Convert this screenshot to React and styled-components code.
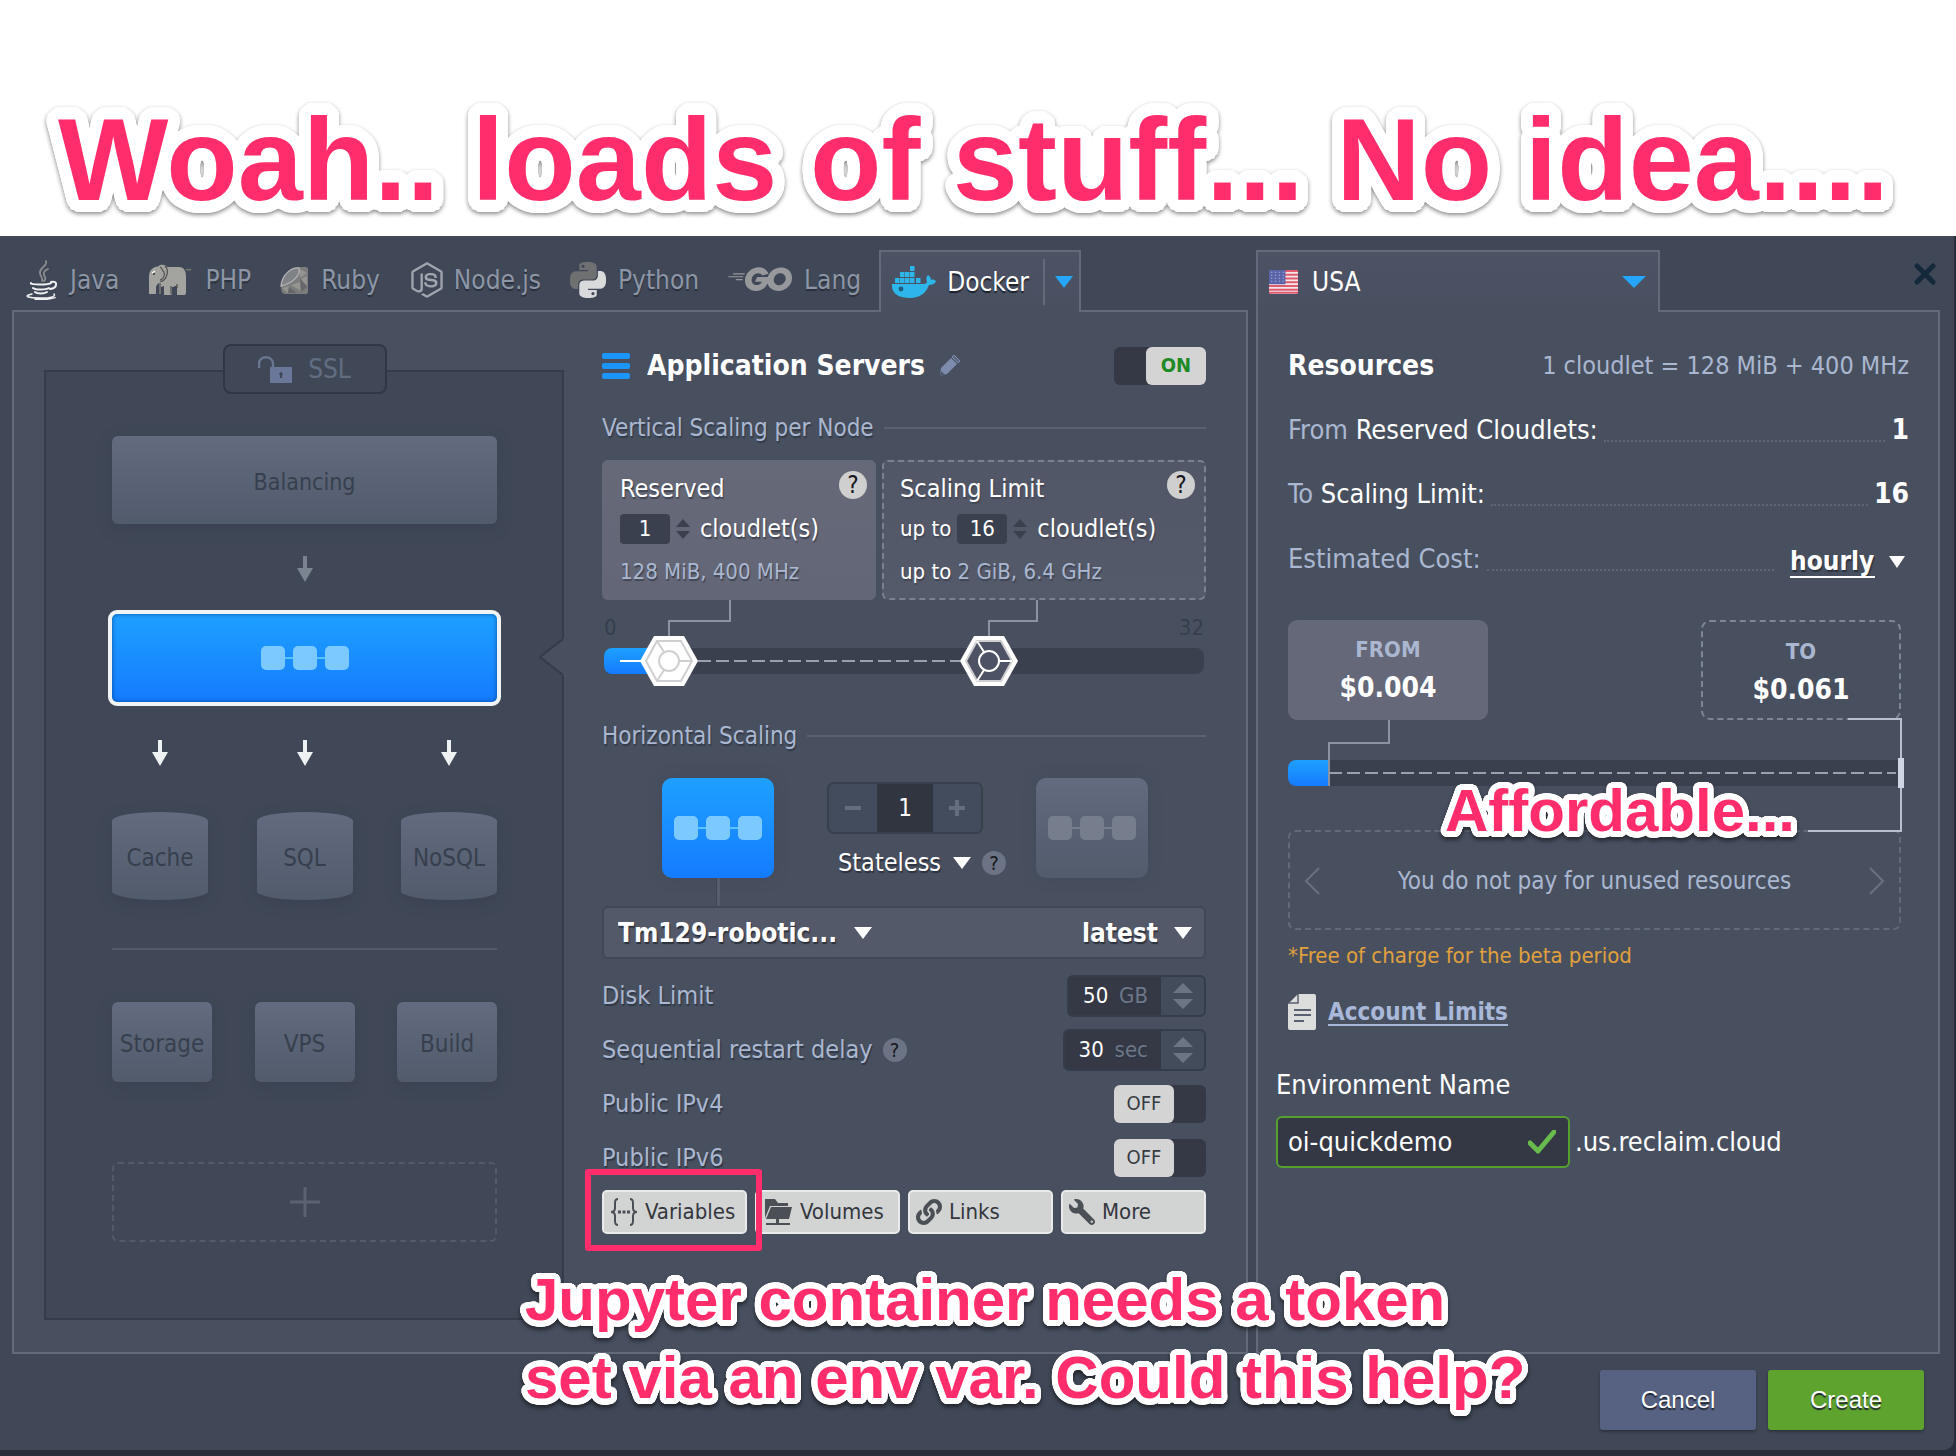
import React from "react";
import styled, { createGlobalStyle, css } from "styled-components";
import { FaJava, FaNodeJs, FaLink, FaWrench } from "react-icons/fa";
import { FaGolang } from "react-icons/fa6";

const c = {
  dialog: "#404857",
  panel: "#485060",
  line: "#636b7b",
  well: "#343945",
  muted: "#abb7d0",
  blue: "linear-gradient(#1ea0ff, #147bff)",
  tile: "linear-gradient(#626b7f, #525b6c)",
  pink: "#ff2d6b",
};

const Global = createGlobalStyle`
  * { box-sizing: border-box; }
  body {
    margin: 0;
    background: #282e3b;
    color: #fff;
    font: 26px/32px "DejaVu Sans Condensed", "DejaVu Sans", Tahoma, sans-serif;
  }
  button, input, select { font: inherit; color: inherit; margin: 0; }
  button { padding: 0; border: 0; background: none; cursor: pointer; }
  h1, h2, h3, p { margin: 0; }
  svg { display: block; flex: none; }
`;

const Page = styled.div`
  position: relative;
  overflow: hidden;
`;

/* ---------- callout texts with a round white halo ---------- */

const halo = (radius) =>
  Array.from({ length: 48 }, (_, i) => {
    const a = (i * Math.PI) / 24;
    return `${(radius * Math.cos(a)).toFixed(1)}px ${(radius * Math.sin(a)).toFixed(1)}px 0 #fff`;
  })
    .concat(radius > 8 ? Array.from({ length: 16 }, (_, i) => {
      const a = (i * Math.PI) / 8;
      return `${Math.round(6 * Math.cos(a))}px ${Math.round(6 * Math.sin(a))}px 0 #fff`;
    }) : ["0 0 3px #fff"])
    .join(", ");

const outlined = css`
  color: ${c.pink};
  font-family: "Liberation Sans", Arial, sans-serif;
  font-weight: 700;
  white-space: nowrap;
`;

const Banner = styled.header`
  height: 236px;
  padding: 100px 0 0 58px;
  background: #fff;
`;

const BannerTitle = styled.h1`
  ${outlined}
  font-size: 117px;
  line-height: 120px;
  text-shadow: ${halo(12)};
  filter: drop-shadow(0 2px 2px rgba(0, 0, 0, 0.45));
`;

const Note = styled.p`
  ${outlined}
  position: absolute;
  z-index: 5;
  left: ${(p) => p.$x}px;
  top: ${(p) => p.$y}px;
  font-size: 60px;
  line-height: 78px;
  text-shadow: ${halo(6)};
  filter: drop-shadow(0 3px 2px rgba(0, 0, 0, 0.5));
  pointer-events: none;
`;

/* ---------- dialog frame ---------- */

const Dialog = styled.main`
  padding: 14px 14px 20px 12px;
  margin: 0 2px 6px 0;
  background: ${c.dialog};
  border-radius: 0 0 10px 0;
`;

const Columns = styled.div`
  display: grid;
  grid-template-columns: 1236fr 684fr;
  gap: 8px;
`;

const Column = styled.section`
  display: flex;
  flex-direction: column;
  min-width: 0;
`;

const TabStrip = styled.div`
  display: flex;
  height: 60px;
`;

const TabGroup = styled.nav`
  display: flex;
  gap: 29px;
  padding: 0 18px 0 14px;
`;

const Tab = styled.button`
  display: flex;
  align-items: center;
  gap: ${(p) => p.$gap}px;
  color: #8e96a6;
  text-shadow: 0 2px 1px #2a303c;
`;

const ActiveTab = styled.div`
  display: flex;
  align-items: center;
  flex: none;
  width: ${(p) => p.$width}px;
  height: 62px;
  padding: 0 ${(p) => p.$end}px 0 11px;
  border: 2px solid ${c.line};
  border-bottom: 0;
  background: linear-gradient(#4d5264, ${c.panel});
  z-index: 1;
`;

const ActiveTabButton = styled.button`
  display: flex;
  align-items: center;
  gap: 11px;
  flex: 1;
  text-shadow: 0 2px 1px #1b2029;
`;

const DropButton = styled.button`
  display: flex;
  align-items: center;
  justify-content: flex-end;
  width: 30px;
  height: 46px;
  border-left: 2px solid ${c.line};
`;

const RegionSelect = styled.select`
  flex: 1;
  padding: 0 14px;
  border: 0;
  background: none;
  appearance: none;
`;

const Close = styled.button`
  margin: 13px 4px 0 auto;
  align-self: flex-start;
`;

const Panel = styled.div`
  flex: 1;
  border: 2px solid ${c.line};
  background: ${c.panel};
`;

const ServerPanel = styled(Panel)`
  display: grid;
  grid-template-columns: 520fr 604fr;
  gap: 38px;
  padding: 0 40px 32px 30px;
`;

const ResourcePanel = styled(Panel)`
  padding: 22px 29px 0 30px;
`;

/* ---------- topology ---------- */

const Topology = styled.div`
  position: relative;
  display: flex;
  flex-direction: column;
  margin-top: 58px;
  padding: 0 65px 76px 66px;
  border: 2px solid #343c4a;
  background: ${c.dialog};
`;

const Notch = styled.svg`
  position: absolute;
  right: -4px;
  top: 266px;
`;

const Ssl = styled.button`
  display: flex;
  align-items: center;
  justify-content: center;
  align-self: center;
  gap: 16px;
  width: 164px;
  height: 50px;
  margin: -28px 0 42px;
  border: 2px solid #2f3745;
  border-radius: 8px;
  background: ${c.dialog};
  color: #626d82;
`;

const Tile = styled.button`
  flex: ${(p) => (p.$width ? "none" : "1 0 auto")};
  width: ${(p) => (p.$width ? p.$width + "px" : "auto")};
  height: ${(p) => p.$height}px;
  padding-top: 3px;
  border-radius: ${(p) => p.$radius || "6px"};
  background: ${c.tile};
  box-shadow: 0 4px 14px rgba(50, 52, 72, 0.35);
  color: #373f4e;
  font-size: ${(p) => (p.$width ? 24 : 23)}px;
`;

const ActiveLayer = styled.button`
  display: flex;
  align-items: center;
  justify-content: center;
  height: 96px;
  margin: 0 -4px;
  border: 4px solid #f1f4f4;
  border-radius: 9px;
  background: ${c.blue};
  box-shadow: inset 0 0 4px rgba(0, 60, 130, 0.8);
`;

const ArrowRow = styled.div`
  display: flex;
  justify-content: ${(p) => (p.$single ? "center" : "space-between")};
  padding: 0 40px;
  margin: ${(p) => (p.$single ? "32px 0 28px" : "34px 0 46px")};
`;

const TileRow = styled.div`
  display: flex;
  justify-content: space-between;
`;

const Divider = styled.hr`
  width: 100%;
  height: 2px;
  margin: 48px 0 52px;
  border: 0;
  background: #535b6b;
`;

const AddLayer = styled.button`
  display: flex;
  align-items: center;
  justify-content: center;
  height: 80px;
  margin-top: 80px;
  border: 2px dashed #535b6b;
  border-radius: 6px;
`;

/* ---------- application servers ---------- */

const Servers = styled.div`
  display: flex;
  flex-direction: column;
  padding-top: 35px;
  min-width: 0;
`;

const Heading = styled.div`
  display: flex;
  align-items: center;
  height: 38px;
`;

const Title = styled.h2`
  margin: 0 14px 0 17px;
  font-size: 28px;
  line-height: 32px;
`;

const Section = styled.h3`
  display: flex;
  align-items: center;
  gap: 10px;
  height: 30px;
  margin: ${(p) => p.$margin};
  color: ${c.muted};
  font-size: 24px;
  font-weight: 400;
  text-shadow: 1px 2px 1px #333b49;
  &::after {
    content: "";
    flex: 1;
    height: 2px;
    background: #596172;
  }
`;

const Switch = styled.label`
  position: relative;
  display: flex;
  justify-content: ${(p) => (p.$on ? "flex-end" : "flex-start")};
  width: 92px;
  height: 38px;
  margin-left: auto;
  border-radius: 6px;
  background: ${c.well};
  color: ${(p) => (p.$on ? "#1e8a25" : "#363a42")};
  font-size: 20px;
  font-weight: ${(p) => (p.$on ? 700 : 400)};
  text-shadow: none;
  input {
    position: absolute;
    inset: 0;
    width: 100%;
    height: 100%;
    opacity: 0;
  }
  span {
    width: 60px;
    border-radius: 6px;
    background: #d4d4d4;
    line-height: 37px;
    text-align: center;
  }
`;

const Cards = styled.div`
  display: grid;
  grid-template-columns: 274fr 324fr;
  gap: 6px;
`;

const Card = styled.div`
  display: flex;
  flex-direction: column;
  height: 140px;
  padding: 11px 9px 0 ${(p) => (p.$dashed ? 16 : 18)}px;
  border-radius: 6px;
  background: linear-gradient(#666978, #636676);
  text-shadow: 1px 2px 1px #3f4553;
  ${(p) =>
    p.$dashed &&
    css`
      padding-top: 9px;
      border: 2px dashed #7a8191;
      background: linear-gradient(#525768, #555a6b);
    `}
`;

const CardTop = styled.div`
  display: flex;
  justify-content: space-between;
  height: 38px;
  font-size: 25px;
  line-height: 36px;
`;

const CardRow = styled.div`
  display: flex;
  align-items: center;
  height: 40px;
  gap: 6px;
`;

const Small = styled.span`
  font-size: 22px;
  line-height: ${(p) => p.$line || 32}px;
`;

const CountInput = styled.input`
  width: 50px;
  height: 30px;
  padding: 0;
  border: 0;
  border-radius: 4px;
  background: #3a404e;
  text-align: center;
  font-size: 22px;
`;

const CardSuffix = styled.span`
  margin-left: 4px;
  font-size: 25px;
`;

const Help = styled.button`
  width: ${(p) => p.$size}px;
  height: ${(p) => p.$size}px;
  border-radius: 50%;
  background: ${(p) => (p.$dim ? "#6b7384" : "#cfcfd0")};
  color: #15171c;
  font-size: ${(p) => p.$size - 4}px;
  line-height: ${(p) => p.$size}px;
  text-align: center;
  text-shadow: none;
`;

const Slider = styled.div`
  position: relative;
  height: 120px;
  padding: 12px 2px 0;
`;

const SliderScale = styled.div`
  display: flex;
  justify-content: space-between;
  height: 36px;
  color: #363e4c;
  font-size: 22px;
`;

const Track = styled.div`
  height: 26px;
  border-radius: ${(p) => (p.$flat ? "8px 0 0 8px" : "8px")};
  background: #3a404e;
  overflow: hidden;
  &::before {
    content: "";
    display: block;
    width: ${(p) => p.$fill}px;
    height: 100%;
    background: ${c.blue};
  }
`;

const Overlay = styled.svg`
  position: absolute;
  left: 0;
  top: 0;
`;

const RangeInput = styled.input`
  position: absolute;
  left: 0;
  top: ${(p) => p.$top}px;
  width: 100%;
  height: 26px;
  opacity: 0;
`;

const ScaleRow = styled.div`
  display: flex;
  justify-content: space-between;
  padding: 0 58px 0 60px;
`;

const NodeTile = styled.div`
  display: flex;
  align-items: center;
  justify-content: center;
  width: 112px;
  height: 100px;
  border-radius: 10px;
  background: ${(p) => (p.$active ? c.blue : c.tile)};
  box-shadow: 0 0 14px rgba(60, 60, 80, 0.35);
`;

const StepperColumn = styled.div`
  width: 156px;
  padding-top: 4px;
`;

const Stepper = styled.div`
  display: grid;
  grid-template-columns: 48px 1fr 48px;
  height: 52px;
  border: 2px solid #383f4d;
  border-radius: 7px;
  overflow: hidden;
`;

const StepButton = styled.button`
  display: flex;
  align-items: center;
  justify-content: center;
  background: #434c5d;
`;

const StepInput = styled.input`
  min-width: 0;
  border: 0;
  background: #30353f;
  text-align: center;
  font-size: 24px;
`;

const StatelessRow = styled.div`
  display: flex;
  align-items: center;
  gap: 11px;
  width: 180px;
  margin: 14px 0 0 11px;
`;

const Choice = styled.select`
  padding: 0;
  border: 0;
  background: none;
  appearance: none;
  text-shadow: 1px 2px 1px #2b313d;
  font-size: ${(p) => p.$size || 26}px;
  font-weight: ${(p) => (p.$bold ? 700 : 400)};
  line-height: 30px;
  border-bottom: ${(p) => (p.$underline ? "2px solid #fff" : "0")};
`;

const Stem = styled.div`
  width: 4px;
  height: 28px;
  margin-left: 114px;
  background: #565d6d;
  border-left: 1px solid #404857;
`;

const ImageBar = styled.div`
  display: flex;
  align-items: center;
  gap: 16px;
  height: 53px;
  padding: 0 12px 0 14px;
  margin-bottom: 10px;
  border: 2px solid #404755;
  border-radius: 6px;
  background: #545969;
`;

const Spacer = styled.span`
  flex: 1;
`;

const Setting = styled.div`
  display: flex;
  align-items: center;
  gap: 10px;
  height: 54px;
  color: ${c.muted};
  font-size: 25px;
  text-shadow: 1px 2px 1px #2f3745;
`;

const UnitBox = styled.div`
  display: flex;
  align-items: center;
  height: 42px;
  margin-left: auto;
  border: 2px solid #363d4a;
  border-radius: 6px;
  background: #343945;
  color: #6e7687;
  font-size: 22px;
  overflow: hidden;
  span {
    padding: 0 13px 0 8px;
  }
`;

const UnitInput = styled.input`
  width: 42px;
  padding: 0 0 0 14px;
  border: 0;
  background: none;
  color: #fff;
`;

const UnitSteps = styled.button`
  display: flex;
  align-items: center;
  justify-content: center;
  width: 43px;
  height: 100%;
  background: #434c5b;
`;

const Actions = styled.div`
  display: grid;
  grid-template-columns: repeat(4, 1fr);
  gap: 8px;
  margin-top: 5px;
`;

const ActionCell = styled.div`
  position: relative;
`;

const Action = styled.button`
  display: flex;
  align-items: center;
  gap: 7px;
  width: 100%;
  height: 44px;
  padding-left: 6px;
  border: 2px solid #e9eaea;
  border-radius: 5px;
  background: #d2d3d3;
  color: #33373e;
  font-size: 22px;
`;

const Highlight = styled.span`
  position: absolute;
  z-index: 2;
  inset: -21px -15px -17px -17px;
  border: 6px solid ${c.pink};
  border-radius: 3px;
  pointer-events: none;
`;

/* ---------- resources ---------- */

const ResourceRow = styled.div`
  display: flex;
  align-items: center;
  gap: 6px;
  height: ${(p) => (p.$tall ? 66 : 64)}px;
  font-size: 27px;
  white-space: nowrap;
`;

const ResourceTitle = styled.h2`
  flex: 1;
  font-size: 28px;
  line-height: 32px;
`;

const Muted = styled.span`
  color: ${c.muted};
`;

const Formula = styled(Muted)`
  font-size: 25px;
`;

const Dots = styled.span`
  flex: 1;
  height: 24px;
  border-bottom: 2px dotted #5d6576;
`;

const Value = styled.strong`
  font-size: 28px;
`;

const Period = styled.div`
  display: flex;
  align-items: center;
  gap: 14px;
  padding: 6px 4px 0 10px;
`;

const CostBlock = styled.div`
  position: relative;
  margin: 28px 8px 0 0;
`;

const CostBoxes = styled.div`
  display: flex;
  justify-content: space-between;
  margin-bottom: 40px;
`;

const CostBox = styled.div`
  width: 200px;
  height: 100px;
  padding-top: 14px;
  border: ${(p) => (p.$dashed ? "2px dashed #7e8696" : "0")};
  border-radius: 9px;
  background: ${(p) => (p.$dashed ? "none" : "#656878")};
  font-weight: 700;
  text-align: center;
`;

const CostLabel = styled.div`
  color: ${c.muted};
  font-size: 22px;
`;

const CostValue = styled.div`
  font-size: 28px;
  line-height: 44px;
`;

const Tip = styled.div`
  display: flex;
  align-items: center;
  justify-content: space-between;
  height: 100px;
  margin-top: 44px;
  padding: 2px 14px 0;
  border: 2px dashed #626a7a;
  border-radius: 7px;
  color: ${c.muted};
  font-size: 24px;
`;

const BetaNote = styled.p`
  margin: 11px 0 23px;
  color: #e0a03c;
  font-size: 22px;
  line-height: 30px;
`;

const LimitsLink = styled.a`
  display: inline-flex;
  align-items: center;
  gap: 12px;
  color: #a9b8d8;
  font-size: 24px;
  font-weight: 700;
  text-decoration: underline;
  text-decoration-thickness: 2px;
  text-underline-offset: 4px;
`;

const EnvName = styled.div`
  margin: 32px 0 0 -12px;
  font-size: 27px;
`;

const EnvLabel = styled.label`
  display: block;
  margin-bottom: 15px;
`;

const EnvRow = styled.div`
  display: flex;
  align-items: center;
  gap: 5px;
`;

const EnvField = styled.div`
  display: flex;
  align-items: center;
  width: 294px;
  height: 52px;
  padding: 0 12px 0 10px;
  border: 2px solid #55a02e;
  border-radius: 6px;
  background: #333844;
`;

const EnvInput = styled.input`
  flex: 1;
  min-width: 0;
  padding: 0;
  border: 0;
  background: none;
`;

const Footer = styled.footer`
  display: flex;
  justify-content: flex-end;
  gap: 12px;
  padding: 16px 16px 0 0;
`;

const FooterButton = styled.button`
  width: 156px;
  height: 60px;
  border-radius: 3px;
  background: ${(p) => (p.$primary ? "#5ea32e" : "#576282")};
  box-shadow: 0 2px 3px rgba(0, 0, 0, 0.3);
  font-family: "Liberation Sans", Arial, sans-serif;
  font-size: 24px;
  text-shadow: 0 2px 1px #20252f;
`;

/* ---------- drawings ---------- */

const Caret = ({ w = 18, h = 12, fill = "#fff" }) => (
  <svg width={w} height={h} viewBox="0 0 18 12" preserveAspectRatio="none">
    <path d="M0 0h18L9 12z" fill={fill} />
  </svg>
);

const UpDown = ({ w = 14, h = 24, gap = 3, fill = "#3a404e" }) => (
  <svg width={w} height={h} viewBox={`0 0 ${w} ${h}`}>
    <path d={`M0 ${h / 2 - gap}H${w}L${w / 2} 0zM0 ${h / 2 + gap}H${w}L${w / 2} ${h}z`} fill={fill} />
  </svg>
);

const DownArrow = ({ fill = "#eef2f2" }) => (
  <svg width="16" height="26" viewBox="0 0 16 26">
    <path d="M6 0h4v12h6L8 26 0 12h6z" fill={fill} />
  </svg>
);

const Chain = ({ w = 88, box = 24, h = 24, fill = "#7cc9ff", link = "#56c2ff" }) => {
  const step = (w - box) / 2;
  return (
    <svg width={w} height={h} viewBox={`0 0 ${w} ${h}`}>
      <path d={`M${box} ${h / 2}H${step}M${step + box} ${h / 2}H${step * 2}`} stroke={link} strokeWidth="2" />
      {[0, 1, 2].map((i) => (
        <rect key={i} x={i * step} width={box} height={h} rx="5" fill={fill} />
      ))}
    </svg>
  );
};

const JavaIcon = () => (
  <svg width="32" height="40" viewBox="0 0 32 40" fill="none" strokeLinecap="round">
    <path d="M20 1c2 5-7 7-6 12 0 3 3 4 2 8M22 9c-5 2-5 5-3 8 1 2-1 4-1 4" stroke="#8c8c8c" strokeWidth="1.8" />
    <path d="M5 23c-2 2 18 2 20 0M7 28c2 2 13 2 16 0M9 32c2 2 9 2 12 0M25 22c7-2 7 6-1 7" stroke="#eef0f2" strokeWidth="2" />
    <path d="M6 34c-9 2-5 4 9 4 9 0 15-1 13-4M9 39.2c8 .8 15 0 20-1.600" stroke="#eef0f2" strokeWidth="1.500" />
  </svg>
);

const ElephantIcon = () => (
  <svg width="44" height="32" viewBox="0 0 44 32">
    <path
      d="M1 30V13C1 6 5 3 10 2.500 12 0 17 0 19 3h12c5 0 7 4 7 9v17l-1 2h-8V22h-2c-1 1-2 1-3 1v7l-1 1h-7v-9l-3 1v7h-2V19c-2 1-3 3-3 5v6z"
      fill="#a3a39f"
    />
    <path d="M38 6c2-2 3 2 5-1" stroke="#77776f" strokeWidth="1.500" fill="none" />
    <path d="M12 3c3 1 1 3 4 5 1 4-1 7-4 8M17 2c3 3 3 7 1 11-1 3-4 5-6 4M12 19v11M23 22v8M29 20v4" stroke="#4d4f4f" strokeWidth="1.200" fill="none" />
    <path d="M4 9l3-2" stroke="#fff" strokeWidth="1.200" />
    <circle cx="6" cy="10" r="1" fill="#333" />
  </svg>
);

const RubyIcon = () => (
  <svg width="28" height="29" viewBox="0 0 28 29">
    <path d="M22 1h4c1 0 2 1 2 2v23c0 1-1 2-2 2H5c-3 0-4-3-4-10C3 8 11 1 22 1z" fill="#7b7c7c" />
    <path d="M19 2c2 6-5 15-18 18C2 8 12 1 19 2z" fill="#7f8286" stroke="#b4b4b4" strokeWidth="1.300" />
    <path d="M20 3l7 4-7 5zM19 14l8-4v9zM11 19l9-3 1 9zM2 22l7-2-1 7z" fill="#949490" />
    <path d="M20 12l7 9-6 5zM9 21l8 6H8z" fill="#66676a" />
  </svg>
);

const PythonIcon = () => (
  <svg width="36" height="36" viewBox="0 0 24 24" fillRule="evenodd">
    <path
      fill="#6e7072"
      d="M14.250.18l.9.2.73.26.59.3.45.32.34.34.25.34.16.33.1.3.04.26.02.2-.01.13V8.500l-.05.63-.13.55-.21.46-.26.38-.3.31-.33.25-.35.19-.35.14-.33.1-.3.07-.26.04-.21.02H8.770l-.69.05-.59.14-.5.22-.41.27-.33.32-.27.35-.2.36-.15.37-.1.35-.07.32-.04.27-.02.21v3.060H3.170l-.21-.03-.28-.07-.32-.12-.35-.18-.36-.26-.36-.36-.35-.46-.32-.59-.28-.73-.21-.88-.14-1.050-.05-1.230.06-1.220.16-1.040.24-.87.32-.71.36-.57.4-.44.42-.33.42-.24.4-.16.36-.1.32-.05.24-.01h.16l.06.01h8.160v-.83H6.180l-.01-2.750-.02-.37.05-.34.11-.31.17-.28.25-.26.31-.23.38-.2.44-.18.51-.15.58-.12.64-.1.71-.06.77-.04.84-.02 1.270.05zm-6.300 1.980l-.23.33-.08.41.08.41.23.34.33.22.41.09.41-.09.33-.22.23-.34.08-.41-.08-.41-.23-.33-.33-.22-.41-.09-.41.09z"
    />
    <path
      fill="#d8dadb"
      d="M21.040 6.110l.28.06.32.12.35.18.36.27.36.35.35.47.32.59.28.73.21.88.14 1.040.05 1.230-.06 1.230-.16 1.040-.24.86-.32.71-.36.57-.4.45-.42.33-.42.24-.4.16-.36.09-.32.05-.24.02-.16-.01h-8.220v.82h5.840l.01 2.760.02.36-.05.34-.11.31-.17.29-.25.25-.31.24-.38.2-.44.17-.51.15-.58.13-.64.09-.71.07-.77.04-.84.01-1.270-.04-1.070-.14-.9-.2-.73-.25-.59-.3-.45-.33-.34-.34-.25-.34-.16-.33-.1-.3-.04-.25-.02-.2.01-.13v-5.340l.05-.64.13-.54.21-.46.26-.38.3-.32.33-.24.35-.2.35-.14.33-.1.3-.06.26-.04.21-.02.13-.01h5.840l.69-.05.59-.14.5-.21.41-.28.33-.32.27-.35.2-.36.15-.36.1-.35.07-.32.04-.28.02-.21V6.070h2.090l.14.01zm-6.470 14.250l-.23.33-.08.41.08.41.23.33.33.23.41.08.41-.08.33-.23.23-.33.08-.41-.08-.41-.23-.33-.33-.23-.41-.08-.41.08z"
    />
  </svg>
);

const DockerIcon = () => (
  <svg width="44" height="32" viewBox="0 0 44 32" fill="#2eb5ea">
    <path d="M0 18h31c2 0 4-1 4-2-1-3-1-5 1-7 2 1 3 3 3 5 2-1 4 0 5 1-1 3-4 4-7 4-3 8-9 13-19 13C6 32-1 27 0 18z" />
    {[[3, 12], [8, 12], [13, 12], [18, 12], [24, 12], [8, 6], [13, 6], [18, 6], [18, 0]].map(([x, y]) => (
      <rect key={x + "-" + y} x={x} y={y} width="4.500" height="5" />
    ))}
    <circle cx="9" cy="23" r="2.400" fill="#1f5b7c" />
  </svg>
);

const FlagIcon = () => (
  <svg width="29" height="24" viewBox="0 0 30 32" preserveAspectRatio="none">
    <rect width="30" height="32" rx="3" fill="#f2e6ea" />
    {[0, 5, 10, 15, 20, 25, 29].map((y) => (
      <rect key={y} y={y} width="30" height="2.600" fill="#e0586c" />
    ))}
    <rect width="17" height="19" fill="#5a63a8" />
    {[3, 7, 11, 15].map((y) => (
      <path key={y} d={`M2 ${y}h14`} stroke="#a7aed8" strokeDasharray="1.500 2.500" strokeWidth="1.500" />
    ))}
  </svg>
);

const LockIcon = () => (
  <svg width="34" height="27" viewBox="0 0 34 27">
    <path d="M1 12V8c0-9 14-9 14 0v3" fill="none" stroke="#6a7690" strokeWidth="2.500" />
    <rect x="12" y="11" width="22" height="16" rx="1" fill="#6a7798" />
    <path d="M23 16a2 2 0 0 1 1 3.500V22h-2v-2.500A2 2 0 0 1 23 16z" fill="#404857" />
  </svg>
);

const StackIcon = () => (
  <svg width="28" height="26" viewBox="0 0 28 26" fill="#1c95fa">
    <rect width="28" height="6" rx="2" />
    <rect y="10" width="28" height="6" rx="2" />
    <rect y="20" width="28" height="6" rx="2" />
  </svg>
);

const PencilIcon = () => (
  <svg width="22" height="22" viewBox="0 0 22 22">
    <path d="M1 21l1-8L12 3l6 6L8 19z" fill="#7d8bad" />
    <path d="M13 2l2-2 6 6-2 2z" fill="#5d6880" stroke="#7d8bad" />
    <path d="M1 21l1-5 4 4z" fill="#4d566a" />
  </svg>
);

const BracesIcon = () => (
  <svg width="28" height="28" viewBox="0 0 28 28" fill="none" stroke="#4b4f56" strokeWidth="2">
    <path d="M8 1C5 1 5 3 5 5v5c0 3-1 4-4 4 3 0 4 1 4 4v5c0 2 0 4 3 4M20 1c3 0 3 2 3 4v5c0 3 1 4 4 4-3 0-4 1-4 4v5c0 2 0 4-3 4" />
    <path d="M8 14h12" strokeWidth="3" strokeDasharray="3 1.500" />
  </svg>
);

const VolumeIcon = () => (
  <svg width="30" height="28" viewBox="0 0 30 28" fill="#4b4f56">
    <path d="M2 20V1h10l3 4h10v3H7z" />
    <path d="M8 9h21l-3 12H3zM13 21h3v4h-3zM3 25h24v2H3z" />
  </svg>
);

const DocIcon = () => (
  <svg width="28" height="36" viewBox="0 0 28 36">
    <path d="M10 0h16a2 2 0 0 1 2 2v32a2 2 0 0 1-2 2H2a2 2 0 0 1-2-2V10z" fill="#dcdddd" />
    <path d="M10 0v9H0" fill="none" stroke="#596071" strokeWidth="1.500" />
    <path d="M6 16h17M6 21h17M6 27h10" stroke="#596071" strokeWidth="2" />
  </svg>
);

const CheckIcon = () => (
  <svg width="28" height="24" viewBox="0 0 28 24">
    <path d="M2 13l8 8L26 2" fill="none" stroke="#68bb4d" strokeWidth="5" strokeLinecap="round" strokeLinejoin="round" />
  </svg>
);

const Chevron = ({ flip }) => (
  <svg width="16" height="28" viewBox="0 0 16 28">
    <path d={flip ? "M1 1l13 13L1 27" : "M15 1L2 14l13 13"} fill="none" stroke="#697181" strokeWidth="2" />
  </svg>
);

const Plus = ({ size = 16, width = 4, minus, fill = "#646d7d" }) => (
  <svg width={size} height={size} viewBox={`0 0 ${size} ${size}`}>
    <path
      d={`M0 ${size / 2}H${size}${minus ? "" : `M${size / 2} 0V${size}`}`}
      stroke={fill}
      strokeWidth={width}
    />
  </svg>
);

const HexHandle = ({ x, dark }) => (
  <g transform={`translate(${x} 61)`}>
    <path d="M-15-25h30l14 25-14 25h-30L-29 0z" fill="#fff" />
    <path d="M-12-20h24L23 0 12 20h-24L-23 0z" fill={dark ? "#4d5364" : "#fff"} stroke="#cfcfd2" strokeWidth="2" />
    <g fill="none" stroke={dark ? "#fff" : "#cfcfd2"} strokeWidth="2">
      <circle r="10" />
      <path d="M10 0h13M-5-9l-7-11M-5 9l-7 11" />
    </g>
  </g>
);

/* ---------- parts ---------- */

const Toggle = ({ label, on }) => (
  <Switch $on={on}>
    <input type="checkbox" aria-label={label} defaultChecked={on} />
    <span>{on ? "ON" : "OFF"}</span>
  </Switch>
);

const UnitField = ({ id, value, unit }) => (
  <UnitBox>
    <UnitInput id={id} defaultValue={value} />
    <span>{unit}</span>
    <UnitSteps aria-label="Change value">
      <UpDown w={20} h={26} gap={3} fill="#6c7584" />
    </UnitSteps>
  </UnitBox>
);

const TABS = [
  ["Java", <JavaIcon />, 12],
  ["PHP", <ElephantIcon />, 13],
  ["Ruby", <RubyIcon />, 13],
  ["Node.js", <FaNodeJs size={36} color="#a0a5ae" />, 9],
  ["Python", <PythonIcon />, 12],
  ["Lang", <FaGolang size={64} color="#96989c" />, 12],
];

const ACTIONS = [
  ["Variables", <BracesIcon />, true],
  ["Volumes", <VolumeIcon />],
  ["Links", <FaLink size={26} color="#4b4f56" />],
  ["More", <FaWrench size={26} color="#4b4f56" style={{ transform: "scaleX(-1)" }} />],
];

export default function App() {
  return (
    <Page>
      <Global />
      <Banner>
        <BannerTitle>Woah.. loads of stuff... No idea....</BannerTitle>
      </Banner>

      <Dialog>
        <Columns>
          <Column>
            <TabStrip>
              <TabGroup>
                {TABS.map(([name, icon, gap]) => (
                  <Tab key={name} $gap={gap}>
                    {icon}
                    {name}
                  </Tab>
                ))}
              </TabGroup>
              <ActiveTab $width={202} $end={6}>
                <ActiveTabButton>
                  <DockerIcon />
                  Docker
                </ActiveTabButton>
                <DropButton aria-label="More engines">
                  <Caret fill="#25a5fb" />
                </DropButton>
              </ActiveTab>
            </TabStrip>

            <ServerPanel>
              <Topology>
                <Notch width="28" height="38" viewBox="0 0 28 38">
                  <path d="M28 0H25v2L2 19l23 17v2h3z" fill={c.panel} />
                  <path d="M25 1L2 19l23 18" fill="none" stroke="#343c4a" strokeWidth="2" />
                </Notch>
                <Ssl>
                  <LockIcon />
                  SSL
                </Ssl>
                <Tile $height={88}>Balancing</Tile>
                <ArrowRow $single>
                  <DownArrow fill="#7b8391" />
                </ArrowRow>
                <ActiveLayer aria-label="Application servers layer">
                  <Chain />
                </ActiveLayer>
                <ArrowRow>
                  <DownArrow />
                  <DownArrow />
                  <DownArrow />
                </ArrowRow>
                <TileRow>
                  {["Cache", "SQL", "NoSQL"].map((name) => (
                    <Tile key={name} $width={96} $height={88} $radius="50% / 10%">
                      {name}
                    </Tile>
                  ))}
                </TileRow>
                <Divider />
                <TileRow>
                  {["Storage", "VPS", "Build"].map((name) => (
                    <Tile key={name} $width={100} $height={80}>
                      {name}
                    </Tile>
                  ))}
                </TileRow>
                <AddLayer aria-label="Add layer">
                  <Plus size={30} width={3} fill="#5a6273" />
                </AddLayer>
              </Topology>

              <Servers>
                <Heading>
                  <StackIcon />
                  <Title>Application Servers</Title>
                  <PencilIcon />
                  <Toggle label="Application servers" on />
                </Heading>

                <Section $margin="28px 0 17px">Vertical Scaling per Node</Section>
                <Cards>
                  <Card>
                    <CardTop>
                      <label htmlFor="reserved">Reserved</label>
                      <Help $size={28}>?</Help>
                    </CardTop>
                    <CardRow>
                      <CountInput id="reserved" defaultValue="1" />
                      <UpDown h={20} gap={2} />
                      <CardSuffix>cloudlet(s)</CardSuffix>
                    </CardRow>
                    <Small $line={46}>
                      <Muted>128 MiB, 400 MHz</Muted>
                    </Small>
                  </Card>
                  <Card $dashed>
                    <CardTop>
                      <label htmlFor="limit">Scaling Limit</label>
                      <Help $size={28}>?</Help>
                    </CardTop>
                    <CardRow>
                      <Small>up to</Small>
                      <CountInput id="limit" defaultValue="16" />
                      <UpDown h={20} gap={2} />
                      <CardSuffix>cloudlet(s)</CardSuffix>
                    </CardRow>
                    <Small $line={46}>
                      up to <Muted>2 GiB, 6.4 GHz</Muted>
                    </Small>
                  </Card>
                </Cards>

                <Slider>
                  <SliderScale>
                    <span>0</span>
                    <span>32</span>
                  </SliderScale>
                  <Track $fill={60} />
                  <Overlay width="604" height="100" viewBox="0 0 604 100">
                    <path d="M128 0v21H67v20M435 0v21h-48v20" fill="none" stroke="#8b92a2" strokeWidth="2" />
                    <path d="M18 61h24" stroke="#fff" strokeWidth="2" />
                    <path d="M96 61h262" stroke="#9aa0ae" strokeWidth="2" strokeDasharray="13 5" />
                    <HexHandle x={67} />
                    <HexHandle x={387} dark />
                  </Overlay>
                  <RangeInput $top={48} type="range" aria-label="Reserved cloudlets" max="32" defaultValue="1" />
                </Slider>

                <Section $margin="1px 0 27px">Horizontal Scaling</Section>
                <ScaleRow>
                  <NodeTile $active>
                    <Chain w={88} />
                  </NodeTile>
                  <StepperColumn>
                    <Stepper>
                      <StepButton aria-label="Remove node">
                        <Plus minus />
                      </StepButton>
                      <StepInput aria-label="Nodes" defaultValue="1" />
                      <StepButton aria-label="Add node">
                        <Plus />
                      </StepButton>
                    </Stepper>
                    <StatelessRow>
                      <Choice aria-label="Scaling mode" $size={25}>
                        <option>Stateless</option>
                      </Choice>
                      <Caret />
                      <Help $size={24} $dim>?</Help>
                    </StatelessRow>
                  </StepperColumn>
                  <NodeTile>
                    <Chain w={88} fill="#767e8d" link="#767e8d" />
                  </NodeTile>
                </ScaleRow>
                <Stem />
                <ImageBar>
                  <Choice aria-label="Image" $bold>
                    <option>Tm129-robotic...</option>
                  </Choice>
                  <Caret />
                  <Spacer />
                  <Choice aria-label="Tag" $bold>
                    <option>latest</option>
                  </Choice>
                  <Caret />
                </ImageBar>

                <Setting>
                  <label htmlFor="disk">Disk Limit</label>
                  <UnitField id="disk" value="50" unit="GB" />
                </Setting>
                <Setting>
                  <label htmlFor="delay">Sequential restart delay</label>
                  <Help $size={24} $dim>?</Help>
                  <UnitField id="delay" value="30" unit="sec" />
                </Setting>
                {["Public IPv4", "Public IPv6"].map((name) => (
                  <Setting key={name}>
                    {name}
                    <Toggle label={name} />
                  </Setting>
                ))}

                <Actions>
                  {ACTIONS.map(([name, icon, marked]) => (
                    <ActionCell key={name}>
                      <Action>
                        {icon}
                        {name}
                      </Action>
                      {marked && <Highlight />}
                    </ActionCell>
                  ))}
                </Actions>
              </Servers>
            </ServerPanel>
          </Column>

          <Column>
            <TabStrip>
              <ActiveTab $width={404} $end={12}>
                <FlagIcon />
                <RegionSelect aria-label="Region">
                  <option>USA</option>
                </RegionSelect>
                <Caret w={24} fill="#25a5fb" />
              </ActiveTab>
              <Close aria-label="Close">
                <svg width="22" height="22" viewBox="0 0 22 22">
                  <path d="M3 3l16 16M19 3L3 19" stroke="#14293b" strokeWidth="5" strokeLinecap="round" />
                </svg>
              </Close>
            </TabStrip>

            <ResourcePanel>
              <ResourceRow>
                <ResourceTitle>Resources</ResourceTitle>
                <Formula>1 cloudlet = 128 MiB + 400 MHz</Formula>
              </ResourceRow>
              <ResourceRow>
                <span>
                  <Muted>From</Muted> Reserved Cloudlets:
                </span>
                <Dots />
                <Value>1</Value>
              </ResourceRow>
              <ResourceRow>
                <span>
                  <Muted>To</Muted> Scaling Limit:
                </span>
                <Dots />
                <Value>16</Value>
              </ResourceRow>
              <ResourceRow $tall>
                <Muted>Estimated Cost:</Muted>
                <Dots />
                <Period>
                  <Choice aria-label="Cost period" $bold $underline>
                    <option>hourly</option>
                  </Choice>
                  <Caret w={16} />
                </Period>
              </ResourceRow>

              <CostBlock>
                <CostBoxes>
                  <CostBox>
                    <CostLabel>FROM</CostLabel>
                    <CostValue>$0.004</CostValue>
                  </CostBox>
                  <CostBox $dashed>
                    <CostLabel>TO</CostLabel>
                    <CostValue>$0.061</CostValue>
                  </CostBox>
                </CostBoxes>
                <Track $flat $fill={41} />
                <Overlay width="616" height="230" viewBox="0 0 616 230">
                  <path d="M101 100v23H41v43" fill="none" stroke="#8b92a2" strokeWidth="2" />
                  <path d="M41 153h567" stroke="#9aa0ae" strokeWidth="2" strokeDasharray="13 5" />
                  <path d="M560 99h53V211h-93" fill="none" stroke="#b9bfcc" strokeWidth="2" />
                  <path d="M613 138v30" stroke="#d0d5e4" strokeWidth="6" />
                </Overlay>
                <Tip>
                  <button aria-label="Previous tip">
                    <Chevron />
                  </button>
                  You do not pay for unused resources
                  <button aria-label="Next tip">
                    <Chevron flip />
                  </button>
                </Tip>
              </CostBlock>
              <BetaNote>*Free of charge for the beta period</BetaNote>
              <LimitsLink href="#limits">
                <DocIcon />
                Account Limits
              </LimitsLink>

              <EnvName>
                <EnvLabel htmlFor="env">Environment Name</EnvLabel>
                <EnvRow>
                  <EnvField>
                    <EnvInput id="env" defaultValue="oi-quickdemo" />
                    <CheckIcon />
                  </EnvField>
                  .us.reclaim.cloud
                </EnvRow>
              </EnvName>
            </ResourcePanel>
          </Column>
        </Columns>

        <Footer>
          <FooterButton>Cancel</FooterButton>
          <FooterButton $primary>Create</FooterButton>
        </Footer>
      </Dialog>

      <Note $x={1445} $y={772}>Affordable...</Note>
      <Note $x={525} $y={1261}>
        Jupyter container needs a token
        <br />
        set via an env var. Could this help?
      </Note>
    </Page>
  );
}
